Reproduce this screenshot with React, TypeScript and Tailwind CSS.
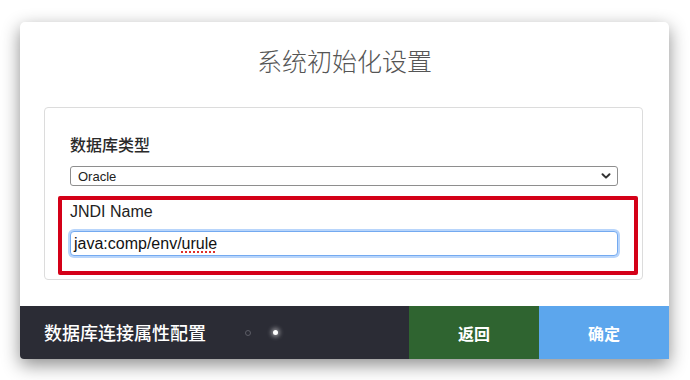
import React from "react";

const sans = '"Liberation Sans", "Noto Sans CJK SC", sans-serif';
const cjk = '"Noto Sans CJK SC", "Liberation Sans", sans-serif';

export default function App() {
  return (
    <div className="w-[690px] h-[380px] bg-white pt-[22px] pl-[20px]" style={{ fontFamily: sans }}>
      <div className="w-[649px] bg-white rounded-t-[5px] rounded-bl-[4px] overflow-hidden shadow-[0_6px_18px_rgba(0,0,0,0.45)] flex flex-col">
        <div
          className="mt-[22px] h-[32px] leading-[32px] text-center text-[25px] font-light text-[#555]"
          style={{ fontFamily: cjk }}
        >
          系统初始化设置
        </div>
        <div className="ml-[24px] mt-[31px] w-[599px] h-[173px] border border-[#dcdcdc] rounded-[4px] pl-[25px] pt-[25px]">
          <div className="h-[22px] leading-[22px] text-[16px] font-medium text-[#2a2a2a]" style={{ fontFamily: cjk }}>
            数据库类型
          </div>
          <div className="mt-[11px] h-[20px] w-[548px] border border-[#8e8e8e] rounded-[3px] bg-white flex items-center justify-between pl-[7px] pr-[6px]">
            <span className="text-[13px] text-[#222] leading-none">Oracle</span>
            <svg width="10" height="8" viewBox="0 0 10 8">
              <path d="M1.5 2.2 L5 5.6 L8.5 2.2" fill="none" stroke="#333" strokeWidth="2" strokeLinecap="round" strokeLinejoin="round" />
            </svg>
          </div>
          <div className="mt-[10px] -ml-[12px] w-[580px] h-[79px] border-4 border-[#d40018] rounded-[2px] pl-[8px] pt-[1px]">
            <div className="h-[22px] leading-[22px] text-[16px] text-[#222]">JNDI Name</div>
            <div className="mt-[8px] w-[548px] h-[25px] border border-[#74aaf0] rounded-[4px] shadow-[0_0_0_2px_#b8d5fb] bg-white flex items-center pl-[3px]">
              <span className="text-[16px] text-[#111] leading-none">
                java:comp/env/
                <span className="underline decoration-dotted decoration-[#e0302b] decoration-2 underline-offset-[3px]">urule</span>
              </span>
            </div>
          </div>
        </div>
        <div className="mt-[26px] h-[53px] flex">
          <div className="flex-1 bg-[#2b2c35] flex items-center pl-[24px]">
            <span className="text-[18px] font-medium text-white" style={{ fontFamily: cjk }}>
              数据库连接属性配置
            </span>
            <span className="ml-[39px] w-[6px] h-[6px] rounded-full border border-[#5c5d66]" />
            <span className="ml-[22px] w-[5px] h-[5px] rounded-full bg-white shadow-[0_0_4px_2px_rgba(255,255,255,0.45)]" />
          </div>
          <div
            className="w-[130px] bg-[#2f6430] flex items-center justify-center text-white text-[16px] font-bold"
            style={{ fontFamily: cjk }}
          >
            返回
          </div>
          <div
            className="w-[130px] bg-[#5ca6ed] flex items-center justify-center text-white text-[16px] font-bold"
            style={{ fontFamily: cjk }}
          >
            确定
          </div>
        </div>
      </div>
    </div>
  );
}
